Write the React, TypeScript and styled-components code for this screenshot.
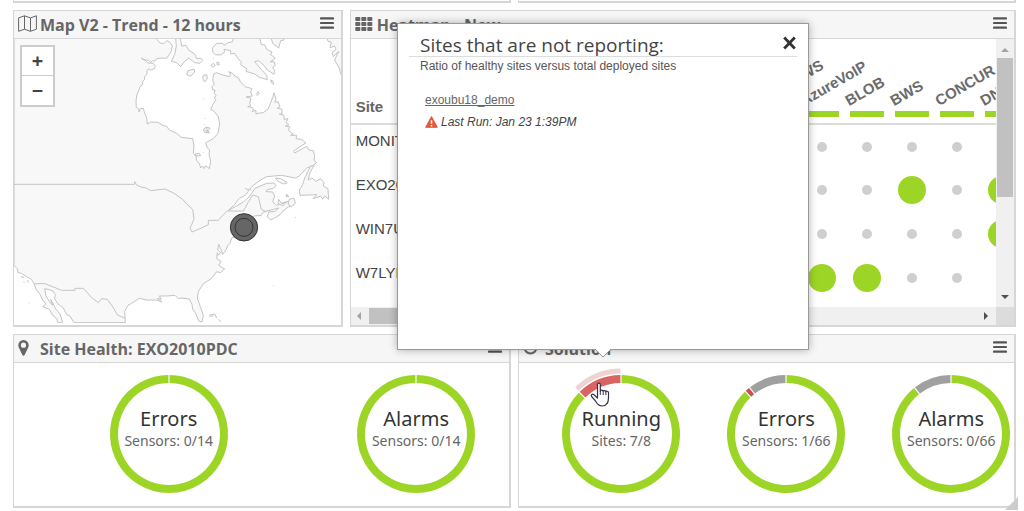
import React from "react";
import styled, { createGlobalStyle } from "styled-components";

const GREEN = "#9dd527";
const RED = "#d96563";
const GREY = "#a0a0a0";
const LINE = "#d6d6d6";
const SANS = '"Liberation Sans", Arial, sans-serif';
const HUMANIST = '"Open Sans", "Noto Sans", sans-serif';

const GlobalStyle = createGlobalStyle`
  *, *::before, *::after { box-sizing: border-box; }
  body {
    margin: 0;
    background: #fff;
    color: #444;
    font-family: ${SANS};
    overflow: hidden;
  }
`;

const Page = styled.main`
  position: relative;
  padding: 0 8px 4px 13px;
`;

const Dashboard = styled.div`
  display: grid;
  grid-template-columns: repeat(6, minmax(0, 1fr));
  gap: 7px;
`;

const Panel = styled.section<{ $span: number }>`
  grid-column: span ${(p) => p.$span};
  display: flex;
  flex-direction: column;
  min-width: 0;
  border: solid ${LINE};
  border-width: 1px 2px 2px 1px;
  background: #fff;
`;

const PanelTail = styled.div<{ $span: number }>`
  grid-column: span ${(p) => p.$span};
  height: 3px;
  border: solid ${LINE};
  border-width: 0 2px 2px 1px;
`;

const PanelHeader = styled.header`
  display: flex;
  align-items: center;
  height: 28px;
  padding: 0 7px 0 4px;
  border-bottom: 1px solid ${LINE};
  background: #f6f6f6;
  flex: none;
`;

const IconSlot = styled.span`
  display: flex;
  width: 22px;
  margin-bottom: 2px;
  flex: none;
  color: #666;
`;

const PanelTitle = styled.h2`
  flex: 1;
  margin: 0;
  font: 700 16px/24px ${HUMANIST};
  color: #666;
  white-space: nowrap;
`;

const MenuButton = styled.button`
  display: flex;
  padding: 0;
  margin-bottom: 4px;
  border: 0;
  background: none;
  color: #555;
  cursor: pointer;
`;

const MapBody = styled.div`
  position: relative;
  height: 286px;
  overflow: hidden;
`;

const MapDrawing = styled.svg`
  display: block;
  width: 100%;
  height: 100%;
`;

const ZoomControl = styled.div`
  position: absolute;
  top: 6px;
  left: 6px;
  width: 35px;
  border: 2px solid #ccc;
  background: #fff;
`;

const ZoomButton = styled.button`
  display: block;
  width: 100%;
  height: 28px;
  padding: 0;
  border: 0;
  background: #fff;
  color: #444;
  font: 700 20px/24px "Noto Sans", sans-serif;
  & + & {
    border-top: 1px solid #ccc;
    height: 30px;
  }
`;

const HeatBody = styled.div`
  display: grid;
  grid-template-columns: minmax(0, 1fr) 18px;
  grid-template-rows: 268px 18px;
`;

const HeatViewport = styled.div`
  overflow: hidden;
`;

const HeatTable = styled.table`
  width: 674px;
  table-layout: fixed;
  border-collapse: collapse;
`;

const SiteCol = styled.col`
  width: 404px;
`;

const SensorCol = styled.col`
  width: 45px;
`;

const SiteHeading = styled.th`
  height: 85px;
  padding: 0 5px 7px;
  border-bottom: 2px solid #ddd;
  text-align: left;
  vertical-align: bottom;
  font: 700 15px/18px ${SANS};
  color: #666;
`;

const SensorHeading = styled.th`
  padding: 0 0 6px;
  border-bottom: 2px solid #ddd;
  vertical-align: bottom;
`;

const Slanted = styled.span`
  display: block;
  width: 34px;
  margin: 0 auto 3px;
  font: 700 15px/14px ${SANS};
  color: #6b6b6b;
  text-align: left;
  white-space: nowrap;
  transform: rotate(-30deg);
  transform-origin: 0 100%;
`;

const StatusBar = styled.span`
  display: block;
  width: 34px;
  height: 6px;
  margin: 0 auto;
  background: ${GREEN};
`;

const SiteName = styled.th`
  height: 44px;
  padding: 0 5px 11px;
  text-align: left;
  font: 400 15px/18px ${SANS};
  color: #444;
`;

const SensorCell = styled.td`
  padding: 0;
`;

const Dot = styled.span<{ $active: boolean }>`
  display: block;
  width: ${(p) => (p.$active ? 28 : 10)}px;
  height: ${(p) => (p.$active ? 28 : 10)}px;
  margin: 0 auto;
  border-radius: 50%;
  background: ${(p) => (p.$active ? GREEN : "#cfcfcf")};
`;

const VerticalTrack = styled.div`
  display: flex;
  flex-direction: column;
  align-items: center;
  justify-content: space-between;
  padding: 7px 1px 6px;
  background: #f0f0f0;
`;

const VerticalThumb = styled.div`
  width: 16px;
  height: 139px;
  margin: 4px 0 auto;
  background: #c1c1c1;
`;

const HorizontalTrack = styled.div`
  display: flex;
  align-items: center;
  padding: 1px 6px 1px 5px;
  background: #f0f0f0;
`;

const HorizontalThumb = styled.div`
  width: 50%;
  height: 16px;
  margin: 0 auto 0 5px;
  background: #c1c1c1;
`;

const TrackCorner = styled.div`
  background: #dcdcdc;
`;

const GaugeRow = styled.div`
  display: flex;
  align-items: center;
  height: 143px;
  padding-bottom: 2px;
`;

const GaugeCell = styled.div<{ $offset: number }>`
  display: flex;
  flex: 1 1 0;
  min-width: 0;
  justify-content: center;
  padding-left: ${(p) => p.$offset}%;
`;

const GaugeBox = styled.div`
  position: relative;
  flex: none;
  display: grid;
  width: 118px;
  height: 118px;
  & > * {
    grid-area: 1 / 1;
  }
`;

const Ring = styled.svg`
  display: block;
  overflow: visible;
`;

const GaugeText = styled.div`
  display: flex;
  flex-direction: column;
  align-items: center;
  padding-top: 30px;
  white-space: nowrap;
`;

const GaugeName = styled.strong`
  font: 400 20px/28px "Noto Sans", sans-serif;
  color: #333;
`;

const GaugeValue = styled.span`
  font: 400 14px/16px "Noto Sans", sans-serif;
  color: #666;
`;

const Pointer = styled.svg`
  position: absolute;
  left: 28px;
  top: 7px;
`;

const Popup = styled.aside`
  position: absolute;
  top: 23px;
  left: 397px;
  width: 412px;
  height: 327px;
  padding: 10px 11px;
  border: 1px solid #999;
  background: #fff;
  box-shadow: 0 0 8px rgba(0, 0, 0, 0.3);
`;

const PopupHeader = styled.div`
  display: flex;
  justify-content: space-between;
  align-items: center;
  height: 23px;
  padding-left: 11px;
  border-bottom: 1px solid #ddd;
`;

const PopupTitle = styled.h3`
  margin: 0;
  font: 400 19px/24px ${HUMANIST};
  color: #444;
`;

const CloseButton = styled.button`
  display: flex;
  padding: 0 0 5px;
  border: 0;
  background: none;
  color: #333;
`;

const PopupNote = styled.p`
  margin: 1px 0 0 11px;
  font: 400 12px/16px ${SANS};
  color: #555;
`;

const SiteEntry = styled.div`
  display: flex;
  flex-direction: column;
  align-items: flex-start;
  gap: 6px;
  margin: 18px 0 0 16px;
  font: 400 12px/16px ${SANS};
`;

const SiteLink = styled.a`
  color: #666;
`;

const LastRun = styled.span`
  display: flex;
  align-items: center;
  gap: 3px;
  font-style: italic;
  color: #444;
`;

const PopupArrow = styled.svg`
  position: absolute;
  top: 100%;
  left: 196px;
  margin-top: -1px;
`;

const ResizeCorner = styled.svg`
  position: absolute;
  right: 6px;
  bottom: 2px;
`;

const MenuIcon = () => (
  <svg width="14" height="12" viewBox="0 0 14 12" aria-hidden="true">
    <path d="M1 1.4h12M1 6h12M1 10.6h12" stroke="currentColor" strokeWidth="2.2" strokeLinecap="round" />
  </svg>
);

const MapIcon = () => (
  <svg width="19" height="17" viewBox="0 0 19 17" fill="none" stroke="currentColor" strokeWidth="1" strokeLinejoin="round">
    <path d="M.6 2.900 6.500.8l6 2.100L18.400.8v13.400l-5.900 2.100-6-2.100-5.900 2.100zM6.500.8v13.400M12.500 2.900v13.400" />
  </svg>
);

const GridIcon = () => (
  <svg width="18" height="14" viewBox="0 0 18 14" fill="currentColor">
    {[0, 5, 10].map((y) =>
      [0, 6, 12].map((x) => <rect key={`${x}-${y}`} x={x + 0.3} y={y} width="5" height="4" rx="0.8" />)
    )}
  </svg>
);

const PinIcon = () => (
  <svg width="11" height="16" viewBox="0 0 11 16" fill="currentColor">
    <path fillRule="evenodd" d="M5.500 0A5.200 5.200 0 0 1 10.700 5.200c0 1-.2 1.700-.5 2.400L6.600 15c-.4.900-1.800.900-2.200 0L.8 7.600C.5 6.900.3 6.200.3 5.200A5.200 5.200 0 0 1 5.500 0zM5.500 2.600a2.600 2.600 0 1 0 0 5.200 2.600 2.600 0 0 0 0-5.200z" />
  </svg>
);

const CircleIcon = () => (
  <svg width="15" height="15" viewBox="0 0 15 15" fill="none" stroke="currentColor" strokeWidth="2">
    <circle cx="7.500" cy="7.500" r="6" />
  </svg>
);

const WarningIcon = () => (
  <svg width="13" height="12" viewBox="0 0 13 12">
    <path d="M6.500.6 12.300 11.300H.7z" fill="#e2583e" stroke="#e2583e" strokeLinejoin="round" />
    <path d="M6.500 4.200v3.600M6.500 8.900v1.500" stroke="#fff" strokeWidth="1.500" />
  </svg>
);

const Arrow = ({ d, color }: { d: string; color: string }) => (
  <svg width="8" height="8" viewBox="0 0 8 8" aria-hidden="true">
    <path d={d} fill={color} />
  </svg>
);

const LAND =
  "M42 100H470V120L480 131 492 133 500 124 508 127 517 140 513 158 506 168 500 177 486 176 470 178 464 186 458 184 452 190 446 183 434 181 424 177 436 184 444 191 460 192 466 201 463 208 452 212 446 208 440 217 442 224 433 232 434 240 427 248 428 256 420 262 416 275 411 285 408 305 409 324 416 328 417 338 421 328 430 327 434 342 440 355 442 374 452 368 474 369 488 378 500 381 508 392 530 402 544 414 578 418 582 440 580 462 588 470 590 485 598 492 602 506 608 500 613 508 617 499 628 508 632 486 627 465 629 452 622 446 617 430 640 418 654 402 659 375 655 352 642 336 632 330 638 317 648 300 643 296 648 288 642 282 645 272 638 272 636 262 643 254 638 243 641 224 650 220 665 226 688 232 692 224 686 217 698 222 706 232 714 234 722 248 735 262 756 268 752 278 757 290 738 293 753 297 749 312 752 320 743 322 757 325 761 332 756 336 768 334 768 344 778 341 790 340 805 328 812 310 818 295 822 280 828 300 824 308 834 308 840 322 832 326 846 330 846 344 838 344 852 348 852 360 864 358 858 370 867 376 856 380 868 382 866 394 880 404 872 408 890 408 888 418 904 420 918 431 906 438 880 456 884 461 920 441 926 452 940 454 944 470 942 484 950 490 940 498 920 506 905 522 898 530 886 536 845 528 800 532 780 543 755 562 736 588 718 597 702 618 684 634 706 622 730 608 748 592 765 567 800 552 822 551 828 559 820 567 802 571 798 577 818 578 824 590 818 608 830 618 850 610 866 606 872 600 884 612 866 622 848 636 840 646 824 656 812 662 802 652 806 638 826 636 836 626 814 632 790 638 784 648 762 650 750 662 745 700 695 716 690 732 682 740 678 752 668 765 662 748 656 735 653 752 662 760 655 768 652 760 650 778 663 786 656 798 668 806 674 808 662 820 650 817 634 838 610 853 595 877 592 896 602 925 610 948 606 968 597 966 586 940 578 930 576 915 568 899 545 896 535 898 525 888 500 890 478 890 484 900 472 897 486 908 468 902 440 902 418 897 395 912 384 918 374 936 376 970H222L210 950 200 946 190 926 172 912 164 898 166 886 158 874 134 868 138 890 148 906 158 918 152 900 168 930 180 944 188 970H174L170 958 158 948 148 930 128 922 138 914 128 902 120 885 108 870 102 852 94 840 80 832 64 822 54 820 52 808 42 798Z";

const ISLANDS = [
  "M526 110 529 140 524 165 514 186 530 190 542 202 552 188 566 176 584 190 600 192 608 184 602 176 590 178 584 164 566 152 558 138 545 140 540 110Z",
  "M700 110 698 127 684 130 672 138 668 132 650 132 638 145 638 158 646 166 662 167 674 158 672 150 692 154 692 164 704 162 714 178 724 188 722 196 740 208 738 216 764 224 778 234 802 241 800 228 780 206 764 187 776 184 792 198 802 212 822 225 824 214 818 204 826 198 822 186 810 188 826 176 812 166 816 158 800 150 794 136 784 136 778 110Z",
  "M812 110 818 132 836 146 842 124 852 122 850 110Z",
  "M980 110 984 126 994 128 990 145 1004 140 1008 150 996 160 1000 172 1016 156 1004 182 1018 206 1022 225 1034 228V110Z",
  "M560 226 564 214 582 209 584 218 572 231Z",
  "M608 238 610 228 620 226 622 238 614 248Z",
  "M632 198 640 192 646 198 638 203ZM650 190 656 188 658 196 652 197Z",
  "M770 282 774 277 778 282 772 288ZM812 242 820 246 820 255 814 250Z",
  "M610 390 618 384 630 386 624 394 628 400 614 400ZM614 392 624 398M618 382 626 402",
  "M586 464 598 462 602 469 588 470Z",
  "M932 500 942 498 930 520 924 542 936 536 948 546 962 538 972 550 970 560 984 568 986 600 974 590 968 600 962 590 940 598 950 586 900 588 898 572 908 556 914 536Z",
  "M826 536 842 538 862 550 850 554 834 546Z",
  "M836 600 846 614 860 606 848 620 834 612ZM860 584 866 592 858 592Z",
  "M868 600 882 596 886 612 874 622 864 614Z",
  "M628 947 644 944 650 956M656 960 662 968M628 950H640",
  "M62 832 72 834M84 842V850M86 910 88 912M70 847 74 849M610 298 612 299M614 357 616 359M612 375 614 377M640 176 642 178M610 460 612 461M885 654 887 655M820 857 821 859",
  "M735 566 744 572 754 570",
];

const BORDERS = [
  "M42 555H404V547L410 557 426 564 436 565 452 574 495 569 522 582 548 600 560 614 578 630 582 660 570 687 576 698 600 688 625 676V663H655L666 650 682 635H730L744 610 758 587 775 592 784 630 800 638",
  "M104 853H135L185 873H225V867H250L275 895 295 910 305 898 322 900 340 925 352 947 376 957",
];

const NorthAmerica = () => (
  <MapDrawing viewBox="42 119 980 858" preserveAspectRatio="xMinYMin slice" role="img" aria-label="Map of eastern North America">
    <g fill="#f8f8f8" stroke="#c4c4c4" strokeWidth="3" strokeLinejoin="round">
      <path d={LAND} />
      {ISLANDS.map((d) => (
        <path key={d} d={d} />
      ))}
      {BORDERS.map((d) => (
        <path key={d} d={d} fill="none" />
      ))}
    </g>
    <path d="M30 972H1030V990H30Z" fill="#fff" />
    <g fill="#666" stroke="#333" strokeWidth="3">
      <circle cx="732" cy="684" r="41" />
      <circle cx="732" cy="684" r="27" />
    </g>
  </MapDrawing>
);

const polar = (r: number, deg: number) => {
  const a = ((deg - 90) * Math.PI) / 180;
  return `${(59 + r * Math.cos(a)).toFixed(2)} ${(59 + r * Math.sin(a)).toFixed(2)}`;
};

const arc = (r: number, from: number, to: number) =>
  `M${polar(r, from)}A${r} ${r} 0 ${to - from > 180 ? 1 : 0} 1 ${polar(r, to)}`;

type Slice = { share: number; color: string };

type GaugeProps = {
  name: string;
  value: string;
  slices: Slice[];
  highlighted?: number;
  offset: number;
};

const HandPointer = () => (
  <Pointer width="20" height="25" viewBox="0 0 20 25" aria-hidden="true">
    <path
      d="M7.500 14V2.600c0-2 2.800-2 2.800 0V9.200c.2-1.500 2.700-1.400 2.900.2.300-1.300 2.500-1.100 2.700.5.300-1.100 2.400-.9 2.600.7v5.200c0 4.500-2.100 8.200-6.500 8.200-3.600 0-5-2-6.600-5.200L1.600 14.500c-1-1.900.9-3.100 2.400-1.700L7.500 16z"
      fill="#fff"
      stroke="#334"
      strokeWidth="1.200"
      strokeLinejoin="round"
    />
    <path d="M10.300 9v4M13.200 9.500V13M15.900 10v3" stroke="#334" />
  </Pointer>
);

const Gauge = ({ name, value, slices, highlighted, offset }: GaugeProps) => {
  const total = slices.reduce((sum, s) => sum + s.share, 0);
  let start = 0;
  const arcs = slices.map((s) => {
    const from = start;
    start += (s.share / total) * 360;
    return { from, to: start, color: s.color };
  });
  return (
    <GaugeCell $offset={offset}>
      <GaugeBox>
        <Ring width="118" height="118" viewBox="0 0 118 118" fill="none" aria-hidden="true">
          {arcs.map((a, i) => (
            <React.Fragment key={i}>
              <path d={arc(55, a.from + 0.6, a.to - 0.6)} stroke={a.color} strokeWidth="8" />
              {highlighted === i && (
                <path d={arc(63, a.from + 0.5, a.to - 0.5)} stroke="#efd2d1" strokeWidth="5" />
              )}
            </React.Fragment>
          ))}
        </Ring>
        <GaugeText>
          <GaugeName>{name}</GaugeName>
          <GaugeValue>{value}</GaugeValue>
        </GaugeText>
        {highlighted !== undefined && <HandPointer />}
      </GaugeBox>
    </GaugeCell>
  );
};

const Header = ({ icon, title }: { icon: React.ReactNode; title: string }) => (
  <PanelHeader>
    <IconSlot>{icon}</IconSlot>
    <PanelTitle>{title}</PanelTitle>
    <MenuButton aria-label={`${title} menu`}>
      <MenuIcon />
    </MenuButton>
  </PanelHeader>
);

const SENSORS = ["AzureAWS", "AzureVoIP", "BLOB", "BWS", "CONCUR", "DNS"];
const SITES = [
  { name: "MONITOR", active: [] as number[] },
  { name: "EXO2010", active: [3, 5] },
  { name: "WIN7U", active: [5] },
  { name: "W7LYNC", active: [1, 2] },
];

const Heatmap = () => (
  <HeatBody>
    <HeatViewport>
      <HeatTable>
        <colgroup>
          <SiteCol />
          {SENSORS.map((s) => (
            <SensorCol key={s} />
          ))}
        </colgroup>
        <thead>
          <tr>
            <SiteHeading scope="col">Site</SiteHeading>
            {SENSORS.map((s) => (
              <SensorHeading key={s} scope="col">
                <Slanted>{s}</Slanted>
                <StatusBar />
              </SensorHeading>
            ))}
          </tr>
        </thead>
        <tbody>
          {SITES.map((site) => (
            <tr key={site.name}>
              <SiteName scope="row">{site.name}</SiteName>
              {SENSORS.map((s, i) => (
                <SensorCell key={s}>
                  <Dot $active={site.active.includes(i)} />
                </SensorCell>
              ))}
            </tr>
          ))}
        </tbody>
      </HeatTable>
    </HeatViewport>
    <VerticalTrack>
      <Arrow d="M0 6 4 2 8 6z" color="#a3a3a3" />
      <VerticalThumb />
      <Arrow d="M0 2 4 6 8 2z" color="#505050" />
    </VerticalTrack>
    <HorizontalTrack>
      <Arrow d="M5 0 1 4 5 8z" color="#a3a3a3" />
      <HorizontalThumb />
      <Arrow d="M2 0 6 4 2 8z" color="#505050" />
    </HorizontalTrack>
    <TrackCorner />
  </HeatBody>
);

const SitesPopup = () => (
  <Popup role="dialog" aria-label="Sites that are not reporting">
    <PopupHeader>
      <PopupTitle>Sites that are not reporting:</PopupTitle>
      <CloseButton aria-label="Close">
        <svg width="15" height="14" viewBox="0 0 15 14">
          <path d="M2.200 1.500 12.800 12.500M12.800 1.500 2.200 12.500" stroke="currentColor" strokeWidth="2.800" />
        </svg>
      </CloseButton>
    </PopupHeader>
    <PopupNote>Ratio of healthy sites versus total deployed sites</PopupNote>
    <SiteEntry>
      <SiteLink href="#exoubu18_demo">exoubu18_demo</SiteLink>
      <LastRun>
        <WarningIcon />
        Last Run: Jan 23 1:39PM
      </LastRun>
    </SiteEntry>
    <PopupArrow width="18" height="10" viewBox="0 0 18 10" aria-hidden="true">
      <path d="M0 0 9 9 18 0z" fill="#fff" />
      <path d="M1 1 9 9 17 1" fill="none" stroke="#999" />
    </PopupArrow>
  </Popup>
);

export default function App() {
  return (
    <Page>
      <GlobalStyle />
      <Dashboard>
        <PanelTail $span={3} />
        <PanelTail $span={3} />
        <Panel $span={2}>
          <Header icon={<MapIcon />} title="Map V2 - Trend - 12 hours" />
          <MapBody>
            <NorthAmerica />
            <ZoomControl>
              <ZoomButton aria-label="Zoom in">+</ZoomButton>
              <ZoomButton aria-label="Zoom out">−</ZoomButton>
            </ZoomControl>
          </MapBody>
        </Panel>
        <Panel $span={4}>
          <Header icon={<GridIcon />} title="Heatmap - Now" />
          <Heatmap />
        </Panel>
        <Panel $span={3}>
          <Header icon={<PinIcon />} title="Site Health: EXO2010PDC" />
          <GaugeRow>
            <Gauge offset={12.5} name="Errors" value="Sensors: 0/14" slices={[{ share: 14, color: GREEN }]} />
            <Gauge offset={12.5} name="Alarms" value="Sensors: 0/14" slices={[{ share: 14, color: GREEN }]} />
          </GaugeRow>
        </Panel>
        <Panel $span={3}>
          <Header icon={<CircleIcon />} title="Solution" />
          <GaugeRow>
            <Gauge
              offset={8}
              name="Running"
              value="Sites: 7/8"
              highlighted={1}
              slices={[
                { share: 7, color: GREEN },
                { share: 1, color: RED },
              ]}
            />
            <Gauge
              offset={8}
              name="Errors"
              value="Sensors: 1/66"
              slices={[
                { share: 58, color: GREEN },
                { share: 1, color: "#c9504e" },
                { share: 7, color: GREY },
              ]}
            />
            <Gauge
              offset={8}
              name="Alarms"
              value="Sensors: 0/66"
              slices={[
                { share: 59, color: GREEN },
                { share: 7, color: GREY },
              ]}
            />
          </GaugeRow>
        </Panel>
      </Dashboard>
      <SitesPopup />
      <ResizeCorner width="13" height="13" viewBox="0 0 13 13" aria-hidden="true">
        <path d="M13 0V13H0z" fill="#ccc" />
      </ResizeCorner>
    </Page>
  );
}
